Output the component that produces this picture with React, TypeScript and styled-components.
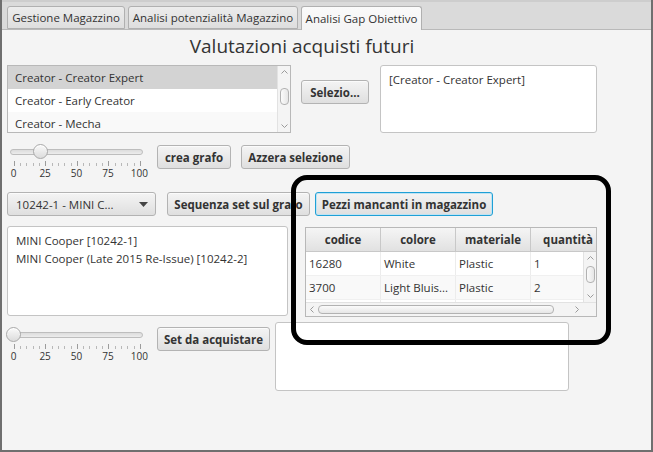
import React from "react";
import styled, {createGlobalStyle} from "styled-components";

const GlobalStyle = createGlobalStyle`
    html, body {
        margin: 0;
        padding: 0;
        background: #f4f4f4;
    }
    body {
        font-family: "Open Sans", "Noto Sans", sans-serif;
        font-size: 11.5px;
        color: #333333;
    }
    * {
        box-sizing: border-box;
    }
`;

const Frame = styled.div`
    position: relative;
    width: 653px;
    height: 452px;
    border: 2px solid #6f6f6f;
    border-top: none;
    background: #f4f4f4;
    display: flex;
    flex-direction: column;
    overflow: hidden;
`;

const TabBar = styled.div`
    height: 30px;
    flex-shrink: 0;
    background: linear-gradient(#cdcdcd 0, #cdcdcd 2px, #dadada 2px);
    border-bottom: 1px solid #b9b9b9;
    display: flex;
    align-items: flex-end;
    gap: 3px;
    padding-left: 5px;
`;

const Tab = styled.div<{$w: number; $active?: boolean}>`
    width: ${(p) => p.$w}px;
    height: ${(p) => (p.$active ? 24 : 23)}px;
    margin-bottom: ${(p) => (p.$active ? -1 : 0)}px;
    border: 1px solid #b0b0b0;
    border-bottom: ${(p) => (p.$active ? "none" : "1px solid #b0b0b0")};
    border-radius: 3px 3px 0 0;
    background: ${(p) =>
        p.$active ? "linear-gradient(#fafafa, #f4f4f4)" : "linear-gradient(#ececec, #dedede)"};
    display: flex;
    align-items: center;
    justify-content: center;
    padding-bottom: ${(p) => (p.$active ? 1 : 0)}px;
    white-space: nowrap;
`;

const Content = styled.div`
    padding: 0 5px;
    display: flex;
    flex-direction: column;
`;

const Title = styled.div`
    width: 590px;
    margin-top: 3px;
    font-size: 19px;
    line-height: 26px;
    text-align: center;
    color: #333333;
`;

const Row = styled.div<{$mt: number; $h: number}>`
    display: flex;
    align-items: flex-start;
    margin-top: ${(p) => p.$mt}px;
    height: ${(p) => p.$h}px;
`;

const Button = styled.div<{$w: number; $ml?: number; $mt?: number; $focused?: boolean}>`
    width: ${(p) => p.$w}px;
    height: 24px;
    margin-left: ${(p) => p.$ml ?? 0}px;
    margin-top: ${(p) => p.$mt ?? 0}px;
    flex-shrink: 0;
    border: 1px solid ${(p) => (p.$focused ? "#1fa0d6" : "#b3b3b3")};
    border-radius: 3px;
    background: linear-gradient(#f4f4f4, #dfdfdf);
    box-shadow: ${(p) =>
        p.$focused ? "inset 0 0 0 1px #bfe3f3" : "inset 0 1px 0 #fbfbfb"};
    font-weight: 700;
    display: flex;
    align-items: center;
    justify-content: center;
    white-space: nowrap;
    overflow: hidden;
`;

const TextArea = styled.div<{$w: number; $h: number; $ml?: number}>`
    width: ${(p) => p.$w}px;
    height: ${(p) => p.$h}px;
    margin-left: ${(p) => p.$ml ?? 0}px;
    flex-shrink: 0;
    border: 1px solid #c4c4c4;
    border-radius: 3px;
    background: #ffffff;
    padding: 5px 8px;
    line-height: 17.5px;
    white-space: nowrap;
    overflow: hidden;
`;

/* list view */
const ListBox = styled.div`
    width: 284px;
    height: 68px;
    flex-shrink: 0;
    border: 1px solid #b8b8b8;
    background: #ffffff;
    display: flex;
    overflow: hidden;
`;

const ListRows = styled.div`
    flex: 1;
    display: flex;
    flex-direction: column;
`;

const ListRow = styled.div<{$selected?: boolean; $odd?: boolean}>`
    height: 23px;
    flex-shrink: 0;
    line-height: 23px;
    padding-left: 7px;
    background: ${(p) => (p.$selected ? "#d3d3d3" : p.$odd ? "#f9f9f9" : "#ffffff")};
    white-space: nowrap;
`;

/* scroll bars */
const VBar = styled.div`
    width: 13px;
    flex-shrink: 0;
    display: flex;
    flex-direction: column;
    align-items: center;
    background: #f4f4f4;
    border-left: 1px solid #e2e2e2;
`;

const VTrack = styled.div`
    flex: 1;
    width: 100%;
    display: flex;
    justify-content: center;
`;

const VThumb = styled.div<{$top: number; $len: number}>`
    width: 9px;
    height: ${(p) => p.$len}px;
    margin-top: ${(p) => p.$top}px;
    border: 1px solid #b2b2b2;
    border-radius: 4px;
    background: linear-gradient(to right, #fbfbfb, #e6e6e6);
`;

const HBar = styled.div`
    height: 14px;
    flex-shrink: 0;
    display: flex;
    align-items: center;
    background: #f4f4f4;
    border-top: 1px solid #e2e2e2;
`;

const HTrack = styled.div`
    flex: 1;
    height: 100%;
    display: flex;
    align-items: center;
`;

const HThumb = styled.div<{$left: number; $len: number}>`
    height: 9px;
    width: ${(p) => p.$len}px;
    margin-left: ${(p) => p.$left}px;
    border: 1px solid #b2b2b2;
    border-radius: 4px;
    background: linear-gradient(#fbfbfb, #e6e6e6);
`;

const Corner = styled.div`
    width: 13px;
    height: 100%;
    background: #f4f4f4;
`;

const Chevron = ({dir}: {dir: "up" | "down" | "left" | "right"}) => {
    const d = {
        up: "M1.5 4.5 L4.5 1.5 L7.5 4.5",
        down: "M1.5 1.5 L4.5 4.5 L7.5 1.5",
        left: "M4.5 1.5 L1.5 4.5 L4.5 7.5",
        right: "M1.5 1.5 L4.5 4.5 L1.5 7.5",
    }[dir];
    const vertical = dir === "up" || dir === "down";
    return (
        <svg
            width={vertical ? 9 : 6}
            height={vertical ? 6 : 9}
            viewBox={vertical ? "0 0 9 6" : "0 0 6 9"}
            style={{flexShrink: 0, margin: vertical ? "3px 0" : "0 3px"}}
        >
            <path d={d} fill="none" stroke="#9a9a9a" strokeWidth="1" />
        </svg>
    );
};

/* slider */
const SliderBox = styled.div<{$ml: number; $mt: number}>`
    width: 133px;
    margin-left: ${(p) => p.$ml}px;
    margin-top: ${(p) => p.$mt}px;
    flex-shrink: 0;
    display: flex;
    flex-direction: column;
`;

const TrackArea = styled.div`
    position: relative;
    height: 17px;
    display: flex;
    align-items: center;
`;

const Track = styled.div`
    width: 100%;
    height: 6px;
    border: 1px solid #bdbdbd;
    border-radius: 3px;
    background: linear-gradient(#dcdcdc, #ececec);
`;

const Thumb = styled.div`
    position: absolute;
    top: 1px;
    width: 15px;
    height: 15px;
    border-radius: 50%;
    border: 1px solid #a9a9a9;
    background: linear-gradient(#fafafa, #dcdcdc);
    box-shadow: inset 0 1px 0 #ffffff;
`;

const TickLabels = styled.div`
    margin: 1px -12px 0 -12px;
    display: grid;
    grid-template-columns: repeat(5, 1fr);
    font-size: 10px;
    line-height: 12px;
    text-align: center;
    color: #333333;
`;

const TICK_START = 3.7;
const TICK_SPAN = 126.3;

function Slider({value, ml, mt}: {value: number; ml: number; mt: number}) {
    const ticks = [];
    for (let i = 0; i <= 20; i++) {
        const x = Math.round(TICK_START + (TICK_SPAN * i) / 20) + 0.5;
        const major = i % 5 === 0;
        ticks.push(
            <line key={i} x1={x} x2={x} y1={major ? 1 : 3} y2={6} stroke={major ? "#9c9c9c" : "#b8b8b8"} />
        );
    }
    const cx = TICK_START + (TICK_SPAN * value) / 100;
    return (
        <SliderBox $ml={ml} $mt={mt}>
            <TrackArea>
                <Track />
                <Thumb style={{left: cx - 7.5}} />
            </TrackArea>
            <svg width="133" height="6">
                {ticks}
            </svg>
            <TickLabels>
                {[0, 25, 50, 75, 100].map((n) => (
                    <span key={n}>{n}</span>
                ))}
            </TickLabels>
        </SliderBox>
    );
}

/* combo box */
const Combo = styled.div`
    width: 149px;
    height: 24px;
    flex-shrink: 0;
    border: 1px solid #b3b3b3;
    border-radius: 3px;
    background: linear-gradient(#f4f4f4, #dfdfdf);
    box-shadow: inset 0 1px 0 #fbfbfb;
    display: flex;
    align-items: center;
    padding: 0 7px 0 8px;
`;

const ComboText = styled.span`
    flex: 1;
    white-space: nowrap;
`;

/* table */
const TableBox = styled.div`
    width: 292px;
    height: 90px;
    margin-left: 17px;
    margin-top: 1px;
    flex-shrink: 0;
    border: 1px solid #b8b8b8;
    background: #ffffff;
    display: flex;
    flex-direction: column;
    overflow: hidden;
`;

const HeaderRow = styled.div`
    height: 24px;
    flex-shrink: 0;
    display: flex;
    background: linear-gradient(#f5f5f5, #e1e1e1);
    border-bottom: 1px solid #c8c8c8;
`;

const HeaderCell = styled.div`
    width: 75px;
    flex-shrink: 0;
    border-right: 1px solid #c8c8c8;
    font-weight: 700;
    text-align: center;
    line-height: 23px;
    white-space: nowrap;
`;

const TableBody = styled.div`
    height: 50px;
    flex-shrink: 0;
    display: flex;
`;

const TableRows = styled.div`
    flex: 1;
    overflow: hidden;
`;

const TableRow = styled.div<{$odd?: boolean}>`
    height: 24px;
    display: flex;
    background: ${(p) => (p.$odd ? "#f9f9f9" : "#ffffff")};
    border-bottom: 1px solid #f0f0f0;
`;

const Cell = styled.div`
    width: 75px;
    flex-shrink: 0;
    padding-left: 3px;
    border-right: 1px solid #ececec;
    line-height: 23px;
    white-space: nowrap;
    overflow: hidden;
`;

const Annotation = styled.div`
    position: absolute;
    left: 289px;
    top: 175px;
    width: 320px;
    height: 170px;
    border: 5px solid #000000;
    border-radius: 16px;
    pointer-events: none;
`;

const rows = [
    ["16280", "White", "Plastic", "1"],
    ["3700", "Light Bluis...", "Plastic", "2"],
    ["", "", "", ""],
];

export default function App() {
    return (
        <>
            <GlobalStyle />
            <Frame>
                <TabBar>
                    <Tab $w={118}>Gestione Magazzino</Tab>
                    <Tab $w={170}>Analisi potenzialità Magazzino</Tab>
                    <Tab $w={121} $active>
                        Analisi Gap Obiettivo
                    </Tab>
                </TabBar>
                <Content>
                    <Title>Valutazioni acquisti futuri</Title>

                    <Row $mt={6} $h={68}>
                        <ListBox>
                            <ListRows>
                                <ListRow $selected>Creator - Creator Expert</ListRow>
                                <ListRow>Creator - Early Creator</ListRow>
                                <ListRow $odd>Creator - Mecha</ListRow>
                            </ListRows>
                            <VBar>
                                <Chevron dir="up" />
                                <VTrack>
                                    <VThumb $top={10} $len={17} />
                                </VTrack>
                                <Chevron dir="down" />
                            </VBar>
                        </ListBox>
                        <Button $w={68} $ml={10} $mt={15}>
                            Selezio...
                        </Button>
                        <TextArea $w={217} $h={68} $ml={11}>
                            [Creator - Creator Expert]
                        </TextArea>
                    </Row>

                    <Row $mt={10} $h={36}>
                        <Slider value={21} ml={3} mt={0} />
                        <Button $w={74} $ml={14} $mt={2}>
                            crea grafo
                        </Button>
                        <Button $w={109} $ml={10} $mt={2}>
                            Azzera selezione
                        </Button>
                    </Row>

                    <Row $mt={13} $h={24}>
                        <Combo>
                            <ComboText>10242-1 - MINI C...</ComboText>
                            <svg width="9" height="5" viewBox="0 0 9 5">
                                <path d="M0 0 L9 0 L4.5 5 Z" fill="#444444" />
                            </svg>
                        </Combo>
                        <Button $w={143} $ml={11}>
                            Sequenza set sul grafo
                        </Button>
                        <Button $w={178} $ml={5} $focused>
                            Pezzi mancanti in magazzino
                        </Button>
                    </Row>

                    <Row $mt={10} $h={91}>
                        <TextArea $w={281} $h={90}>
                            MINI Cooper [10242-1]
                            <br />
                            MINI Cooper (Late 2015 Re-Issue) [10242-2]
                        </TextArea>
                        <TableBox>
                            <HeaderRow>
                                <HeaderCell>codice</HeaderCell>
                                <HeaderCell>colore</HeaderCell>
                                <HeaderCell>materiale</HeaderCell>
                                <HeaderCell>quantità</HeaderCell>
                            </HeaderRow>
                            <TableBody>
                                <TableRows>
                                    {rows.map((r, i) => (
                                        <TableRow key={i} $odd={i % 2 === 1}>
                                            {r.map((c, j) => (
                                                <Cell key={j}>{c}</Cell>
                                            ))}
                                        </TableRow>
                                    ))}
                                </TableRows>
                                <VBar>
                                    <Chevron dir="up" />
                                    <VTrack>
                                        <VThumb $top={2} $len={17} />
                                    </VTrack>
                                    <Chevron dir="down" />
                                </VBar>
                            </TableBody>
                            <HBar>
                                <HTrack>
                                    <Chevron dir="left" />
                                    <HTrack>
                                        <HThumb $left={0} $len={236} />
                                    </HTrack>
                                    <Chevron dir="right" />
                                </HTrack>
                                <Corner />
                            </HBar>
                        </TableBox>
                    </Row>

                    <Row $mt={5} $h={69}>
                        <Slider value={0} ml={3} mt={4} />
                        <Button $w={113} $ml={14} $mt={5}>
                            Set da acquistare
                        </Button>
                        <TextArea $w={294} $h={69} $ml={5} />
                    </Row>
                </Content>
                <Annotation />
            </Frame>
        </>
    );
}
